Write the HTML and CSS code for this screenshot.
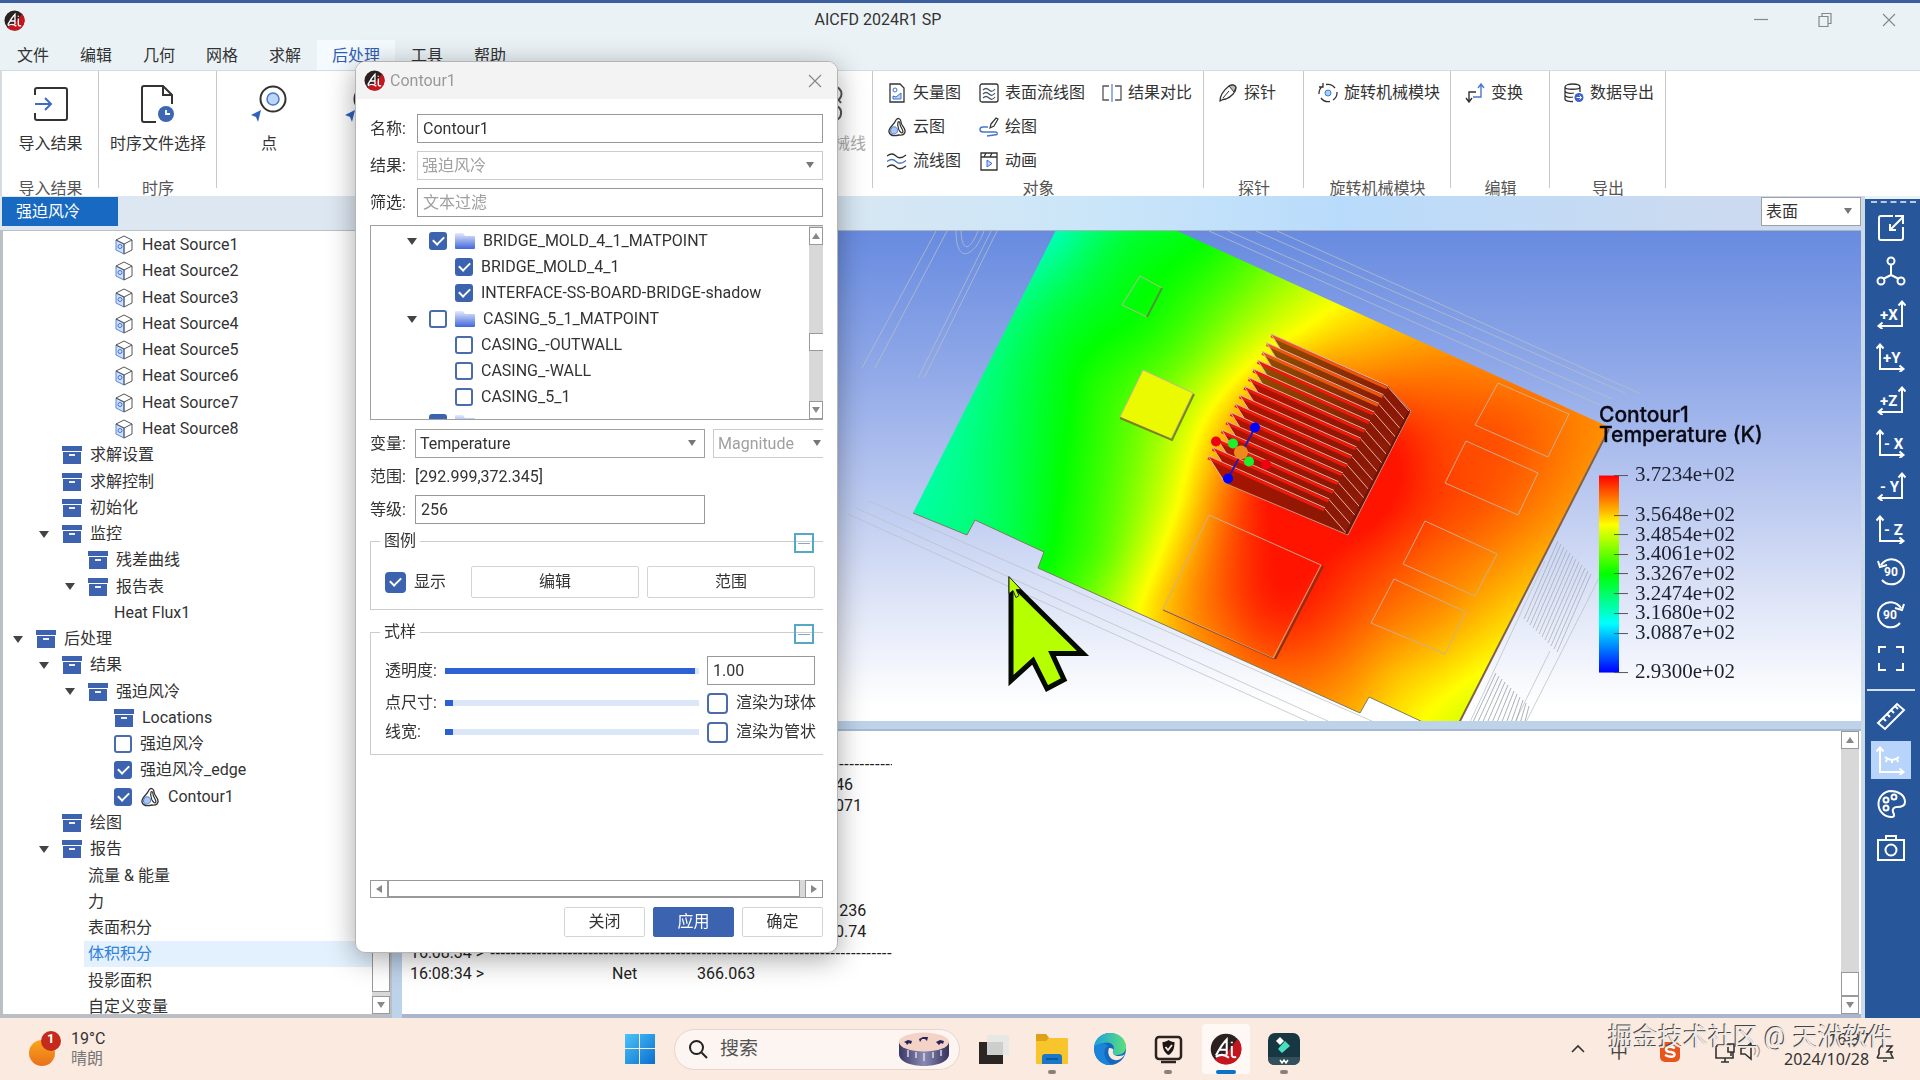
FILE: index.html
```html
<!DOCTYPE html>
<html lang="zh-CN">
<head>
<meta charset="utf-8">
<title>AICFD 2024R1 SP</title>
<link rel="stylesheet" href="styles.css">
</head>
<body>
<svg class="defs" aria-hidden="true">
  <defs>
    <linearGradient id="gFolder" x1="0" y1="0" x2="0" y2="1"><stop offset="0" stop-color="#e4e9fb"/><stop offset="1" stop-color="#3f66dc"/></linearGradient>
    <linearGradient id="gWin" x1="0" y1="0" x2="1" y2="1"><stop offset="0" stop-color="#4cc3f7"/><stop offset="1" stop-color="#0a6ed1"/></linearGradient>
    <linearGradient id="gSun" x1="0" y1="0" x2="0" y2="1"><stop offset="0" stop-color="#f9a51c"/><stop offset="1" stop-color="#e9701a"/></linearGradient>
    <linearGradient id="gEdge" x1="0" y1="0" x2="1" y2="0"><stop offset="0" stop-color="#1d9fe0"/><stop offset="1" stop-color="#5be07a"/></linearGradient>
    <linearGradient id="gCake" x1="0" y1="0" x2="1" y2="0"><stop offset="0" stop-color="#3b3763"/><stop offset=".5" stop-color="#8a8bb3"/><stop offset="1" stop-color="#35315a"/></linearGradient>
    <linearGradient id="gScale" x1="0" y1="0" x2="0" y2="1"><stop offset="0" stop-color="#f00"/><stop offset=".25" stop-color="#ff0"/><stop offset=".5" stop-color="#0f0"/><stop offset=".75" stop-color="#0ff"/><stop offset="1" stop-color="#00f"/></linearGradient>
    <symbol id="logo" viewBox="0 0 22 22"><circle cx="11" cy="11" r="10.5" fill="#2a2020"/><path d="M19 4A10.500 10.500 0 0 1 3 18L12 13Z" fill="#c4161f"/><path d="M4 15.500C6 12 8 8 11.500 4.500V15M6 11.500h5.500M15 9v6q0 2 3 1.500M15 6v1M4 16.500c3-2 6-2 9 .500" fill="none" stroke="#fff" stroke-width="1.400"/></symbol>
    <symbol id="box" viewBox="0 0 20 18"><path d="M0 0h20v5H0zM1 6h18v12H1z" fill="#3d63b0"/><path d="M7 9h6" stroke="#fff" stroke-width="1.800"/></symbol>
    <symbol id="cube" viewBox="0 0 18 20"><path d="M1 5 9 9v10L1 15z" fill="#cfe0fb" stroke="#5b86d6"/><path d="M9 1l8 4v10l-8 4M9 1 1 5l8 4 8-4M9 9v10" fill="none" stroke="#555" stroke-width="1"/><circle cx="5" cy="11.500" r="2" fill="none" stroke="#3f6fd0"/></symbol>
    <symbol id="folder" viewBox="0 0 20 16"><path d="M1 0h7l2 3h9q1 0 1 1v11q0 1-1 1H1q-1 0-1-1V1q0-1 1-1z" fill="url(#gFolder)"/></symbol>
    <symbol id="contour" viewBox="0 0 20 20"><path d="M9 3c2-3 5-1 5 2 0 4 5 6 4 10-1 4-4 3-6 3-4 1-9 1-10-3-1-4 5-7 7-12z" fill="#fff" stroke="#333" stroke-width="1.300"/><path d="M11 5c1-1 2 0 2 2 0 3 3 5 3 8-1 2-3 0-4-2-1-3-2-5-1-8z" fill="none" stroke="#333" stroke-width="1.200"/><path d="M3.500 14c0-3 3-5 5-4s3 4 1 6-6 1-6-2z" fill="#a9c6f5" stroke="#4a78c8"/></symbol>
    <symbol id="import" viewBox="0 0 36 36"><path d="M2 9V4q0-2 2-2h28q2 0 2 2v28q0 2-2 2H4q-2 0-2-2v-5" fill="none" stroke="#333" stroke-width="2"/><path d="M2 18h16M12 12l6 6-6 6" fill="none" stroke="#3d6cc0" stroke-width="2"/></symbol>
    <symbol id="timefile" viewBox="0 0 34 38"><path d="M31 19V10L22 1H3q-2 0-2 2v32q0 2 2 2h12M22 1v9h9" fill="none" stroke="#333" stroke-width="2"/><circle cx="25" cy="29" r="8" fill="#3d66b3"/><path d="M25 25v4h4" fill="none" stroke="#fff" stroke-width="1.800"/></symbol>
    <symbol id="point" viewBox="0 0 36 38"><circle cx="22" cy="14" r="12.500" fill="none" stroke="#333" stroke-width="2"/><circle cx="22" cy="14" r="6" fill="#bcd6fa" stroke="#4a78c8" stroke-width="1.500"/><path d="M10 25 0 30l5 2 2 5z" fill="#2f62bd"/></symbol>
    <symbol id="rotline" viewBox="0 0 36 38"><circle cx="26" cy="9" r="7.500" fill="none" stroke="#555" stroke-width="2"/><path d="M30 14l3 4M24 20q10 1 9 9t-11 5" fill="none" stroke="#555" stroke-width="2"/></symbol>
    <symbol id="vector" viewBox="0 0 20 20"><path d="M3 1h10l4 4v14H3z" fill="none" stroke="#333" stroke-width="1.300"/><circle cx="8" cy="7" r="2" fill="none" stroke="#3f6fd0"/><path d="M6 16v-3l3 1 5-4v6z" fill="#bcd6fa" stroke="#3f6fd0"/></symbol>
    <symbol id="surf" viewBox="0 0 20 20"><rect x="1" y="1" width="18" height="18" rx="2" fill="none" stroke="#333" stroke-width="1.300"/><path d="M4 7q3-3 6 0t6-1M4 11q3-3 6 0t6-1M4 15q3-3 6 0t6-1" fill="none" stroke="#456" stroke-width="1.200"/></symbol>
    <symbol id="compare" viewBox="0 0 20 20"><path d="M7 3H1v14h6M13 3h6v14h-6" fill="none" stroke="#555" stroke-width="1.300"/><path d="M10 1v18" stroke="#5b86d6" stroke-width="1.300"/></symbol>
    <symbol id="plot" viewBox="0 0 20 20"><path d="M12 7l5-6 2 1-4 7-4 2z" fill="none" stroke="#333" stroke-width="1.200"/><path d="M9 10H4q-3 0-3 2.500T4 15h12q3 0 2 2.500L8 19" fill="none" stroke="#4a78c8" stroke-width="1.400"/></symbol>
    <symbol id="stream" viewBox="0 0 20 20"><path d="M0 5q5-4 9 0t10-1" fill="none" stroke="#333" stroke-width="1.300"/><path d="M0 10.500q5-4 9 0t10-1" fill="none" stroke="#4a78c8" stroke-width="1.300"/><path d="M0 16q5-4 9 0t10-1" fill="none" stroke="#333" stroke-width="1.300"/></symbol>
    <symbol id="anim" viewBox="0 0 20 20"><path d="M2 2h16v17H2zM2 6h16M7 2 5 6M13 2l-2 4" fill="none" stroke="#333" stroke-width="1.300"/><path d="M8 9l5 3.500L8 16z" fill="#bcd6fa" stroke="#3f6fd0"/></symbol>
    <symbol id="probe" viewBox="0 0 20 20"><path d="M2 18c0-7 4-11 9-15 3-2 7-1 7 2 0 4-5 9-10 11l-3 .5z" fill="none" stroke="#333" stroke-width="1.300"/><path d="M11 3l5 6 2-5-3-2zM5 15l6-7" fill="#bbb" stroke="#333"/></symbol>
    <symbol id="rotmod" viewBox="0 0 20 20"><path d="M8 1.500A9 9 0 0 1 17 5M19 9a9 9 0 0 1-4 8M12 18.500A9 9 0 0 1 3 15M1 11a9 9 0 0 1 4-8M5 0v4H1" fill="none" stroke="#333" stroke-width="1.300"/><circle cx="10" cy="10" r="3" fill="#a5d3f5" stroke="#4a78c8"/></symbol>
    <symbol id="transform" viewBox="0 0 20 20"><path d="M4 19V9h7M1 15l3 4 3-4" fill="none" stroke="#333" stroke-width="1.400"/><path d="M8 14h8V2M13 5l3-4 3 4" fill="none" stroke="#4a78c8" stroke-width="1.400"/></symbol>
    <symbol id="dbout" viewBox="0 0 20 20"><path d="M1 4v12c0 2 5 3 8 2.500M1 4c0-4 15-4 15 0v5M1 4c0 3 15 3 15 0M1 8c0 2 6 3 9 2M1 12c0 2 5 3 8 2" fill="none" stroke="#333" stroke-width="1.300"/><circle cx="15" cy="14.500" r="4.500" fill="#3d63c8"/><path d="M12.500 14.500h5M15.500 12.500l2 2-2 2" fill="none" stroke="#fff"/></symbol>
    <symbol id="axR" viewBox="0 0 30 30"><path d="M26 3v24H3M22.500 6.500 26 2.500l3.500 4M6.500 23.500 2.500 27l4 3" fill="none" stroke="#fff" stroke-width="2"/></symbol>
    <symbol id="axL" viewBox="0 0 30 30"><path d="M4 3v24h23M.5 6.500 4 2.500l3.500 4M23.500 23.500l4 3.500-4 3" fill="none" stroke="#fff" stroke-width="2"/></symbol>
  </defs>
</svg>

<div class="app">
  <header class="titlebar">
    <svg class="logo"><use href="#logo"/></svg>
    <h1 class="app-title">AICFD 2024R1 SP</h1>
    <div class="win-controls">
      <button aria-label="最小化"><svg viewBox="0 0 16 16"><path d="M1 7.500h14"/></svg></button>
      <button aria-label="还原"><svg viewBox="0 0 16 16"><path d="M2 4.500h9v10H2zM5 4.500v-3h9v10h-3"/></svg></button>
      <button aria-label="关闭"><svg viewBox="0 0 16 16"><path d="M2 2l12 12M14 2 2 14"/></svg></button>
    </div>
  </header>

  <nav class="menubar">
    <button>文件</button><button>编辑</button><button>几何</button><button>网格</button><button>求解</button><button class="active">后处理</button><button>工具</button><button>帮助</button>
  </nav>

  <section class="ribbon">
    <div class="group g-import">
      <div class="big-row"><button class="big"><svg><use href="#import"/></svg>导入结果</button></div>
      <span class="group-label">导入结果</span>
    </div>
    <div class="group g-time">
      <div class="big-row"><button class="big"><svg><use href="#timefile"/></svg>时序文件选择</button></div>
      <span class="group-label">时序</span>
    </div>
    <div class="group g-loc">
      <div class="big-row">
        <button class="big"><svg><use href="#point"/></svg>点</button>
        <button class="big"><svg><use href="#point"/></svg>线</button>
        <button class="big last" disabled><svg><use href="#rotline"/></svg>旋转机械线</button>
      </div>
    </div>
    <div class="group g-obj">
      <div class="small-grid">
        <button><svg><use href="#vector"/></svg>矢量图</button>
        <button><svg><use href="#surf"/></svg>表面流线图</button>
        <button><svg><use href="#compare"/></svg>结果对比</button>
        <button><svg><use href="#contour"/></svg>云图</button>
        <button class="wide"><svg><use href="#plot"/></svg>绘图</button>
        <button><svg><use href="#stream"/></svg>流线图</button>
        <button><svg><use href="#anim"/></svg>动画</button>
      </div>
      <span class="group-label">对象</span>
    </div>
    <div class="group g-probe"><div class="small-grid one"><button><svg><use href="#probe"/></svg>探针</button></div><span class="group-label">探针</span></div>
    <div class="group g-rot"><div class="small-grid one"><button><svg><use href="#rotmod"/></svg>旋转机械模块</button></div><span class="group-label">旋转机械模块</span></div>
    <div class="group g-edit"><div class="small-grid one"><button><svg><use href="#transform"/></svg>变换</button></div><span class="group-label">编辑</span></div>
    <div class="group g-out"><div class="small-grid one"><button><svg><use href="#dbout"/></svg>数据导出</button></div><span class="group-label">导出</span></div>
  </section>

  <div class="workspace">
    <div class="main">
      <div class="tabbar">
        <button class="case-tab">强迫风冷</button>
        <span class="select repr"><select aria-label="显示方式"><option>表面</option></select></span>
      </div>
      <div class="panes">
        <aside class="tree-panel">
          <ul class="tree">
            <li class="l3"><svg class="i-cube"><use href="#cube"/></svg><span>Heat Source1</span></li>
            <li class="l3"><svg class="i-cube"><use href="#cube"/></svg><span>Heat Source2</span></li>
            <li class="l3"><svg class="i-cube"><use href="#cube"/></svg><span>Heat Source3</span></li>
            <li class="l3"><svg class="i-cube"><use href="#cube"/></svg><span>Heat Source4</span></li>
            <li class="l3"><svg class="i-cube"><use href="#cube"/></svg><span>Heat Source5</span></li>
            <li class="l3"><svg class="i-cube"><use href="#cube"/></svg><span>Heat Source6</span></li>
            <li class="l3"><svg class="i-cube"><use href="#cube"/></svg><span>Heat Source7</span></li>
            <li class="l3"><svg class="i-cube"><use href="#cube"/></svg><span>Heat Source8</span></li>
            <li class="l1"><svg class="i-box"><use href="#box"/></svg><span>求解设置</span></li>
            <li class="l1"><svg class="i-box"><use href="#box"/></svg><span>求解控制</span></li>
            <li class="l1"><svg class="i-box"><use href="#box"/></svg><span>初始化</span></li>
            <li class="l1 open"><svg class="i-box"><use href="#box"/></svg><span>监控</span></li>
            <li class="l2"><svg class="i-box"><use href="#box"/></svg><span>残差曲线</span></li>
            <li class="l2 open"><svg class="i-box"><use href="#box"/></svg><span>报告表</span></li>
            <li class="l3"><span>Heat Flux1</span></li>
            <li class="l0 open"><svg class="i-box"><use href="#box"/></svg><span>后处理</span></li>
            <li class="l1 open"><svg class="i-box"><use href="#box"/></svg><span>结果</span></li>
            <li class="l2 open"><svg class="i-box"><use href="#box"/></svg><span>强迫风冷</span></li>
            <li class="l3"><svg class="i-box"><use href="#box"/></svg><span>Locations</span></li>
            <li class="l3"><label><input type="checkbox">强迫风冷</label></li>
            <li class="l3"><label><input type="checkbox" checked>强迫风冷_edge</label></li>
            <li class="l3"><label><input type="checkbox" checked><svg class="i-cont"><use href="#contour"/></svg>Contour1</label></li>
            <li class="l1"><svg class="i-box"><use href="#box"/></svg><span>绘图</span></li>
            <li class="l1 open"><svg class="i-box"><use href="#box"/></svg><span>报告</span></li>
            <li class="l2"><span>流量 &amp; 能量</span></li>
            <li class="l2"><span>力</span></li>
            <li class="l2"><span>表面积分</span></li>
            <li class="l2"><span class="selected">体积积分</span></li>
            <li class="l2"><span>投影面积</span></li>
            <li class="l2"><span>自定义变量</span></li>
          </ul>
          <div class="vscroll"><i class="thumb"></i><i class="sbtn down"></i></div>
        </aside>

        <div class="right">
          <div class="viewport">
            <canvas id="scene" width="1459" height="491"></canvas>
            <svg viewBox="402 230 1459 491" preserveAspectRatio="xMidYMid slice">
              <g stroke-width="2">
                <path d="M1255 427 1228 478" stroke="#2a18b0"/>
                <circle cx="1255" cy="427" r="5" fill="#00f"/><circle cx="1228" cy="478" r="5" fill="#00f"/>
                <circle cx="1216" cy="441" r="5" fill="#f00010"/><circle cx="1266" cy="464" r="5" fill="#f00010"/>
                <circle cx="1241" cy="452" r="7" fill="#ee8a1c"/><circle cx="1233" cy="443" r="5" fill="#1cf02c"/><circle cx="1249" cy="461" r="5" fill="#1cf02c"/>
              </g>
              <rect x="1599" y="475" width="20" height="197" fill="url(#gScale)"/>
              <path d="M1614 475h14M1614 515h14M1614 534h14M1614 554h14M1614 573h14M1614 593h14M1614 613h14M1614 633h14M1614 672h14" stroke="#555" stroke-width="1"/>
              <g class="legend-title"><text x="1599" y="421">Contour1</text><text x="1599" y="441">Temperature (K)</text></g>
              <g class="legend-num">
                <text x="1635" y="480">3.7234e+02</text><text x="1635" y="520">3.5648e+02</text><text x="1635" y="540">3.4854e+02</text><text x="1635" y="559">3.4061e+02</text><text x="1635" y="579">3.3267e+02</text><text x="1635" y="599">3.2474e+02</text><text x="1635" y="618">3.1680e+02</text><text x="1635" y="638">3.0887e+02</text><text x="1635" y="677">2.9300e+02</text>
              </g>
              <path d="M1011 582V680L1033 660 1047 688 1064 679 1052 653H1083Z" fill="#b6ff00" stroke="#050a00" stroke-width="5"/>
              <path d="M1009 576v17l4-3 3 7 3-2-3-6h5z" fill="#b6ff00" stroke="#222" stroke-width="1"/>
            </svg>
          </div>
          <div class="console">
            <div class="log">
              <p><span></span><span class="dash">-------------------------------------------------------------</span></p>
              <p><span></span><span></span><span></span><span>146</span></p>
              <p><span></span><span></span><span></span><span>0071</span></p>
              <p></p><p></p><p></p><p></p>
              <p><span></span><span></span><span></span><span>0.236</span></p>
              <p><span></span><span></span><span></span><span>00.74</span></p>
              <p><span>16:08:34 &gt;</span><span class="dash long">-------------------------------------------------------------------------------------</span></p>
              <p><span>16:08:34 &gt;</span><span>Net</span><span>366.063</span></p>
            </div>
            <div class="vscroll"><i class="sbtn up"></i><i class="track"></i><i class="thumb"></i><i class="sbtn down"></i></div>
          </div>
        </div>
      </div>
    </div>

    <nav class="toolbar">
      <button aria-label="导出视图"><svg viewBox="0 0 30 30"><path d="M17 3H5q-2 0-2 2v20q0 2 2 2h20q2 0 2-2V14M15 16 27 4M19 3h8v8M14 11v6h6"/></svg></button>
      <button aria-label="等轴测"><svg viewBox="0 0 30 30"><path d="M15 8v11M15 19l-8 4M15 19l8 4"/><circle cx="15" cy="5" r="3.500"/><circle cx="5" cy="25" r="3.500"/><circle cx="25" cy="25" r="3.500"/></svg></button>
      <button><svg viewBox="0 0 30 30"><use href="#axR"/><text x="4" y="21">+X</text></svg></button>
      <button><svg viewBox="0 0 30 30"><use href="#axL"/><text x="7" y="21">+Y</text></svg></button>
      <button><svg viewBox="0 0 30 30"><use href="#axR"/><text x="4" y="21">+Z</text></svg></button>
      <button><svg viewBox="0 0 30 30"><use href="#axL"/><text x="8" y="21">- X</text></svg></button>
      <button><svg viewBox="0 0 30 30"><use href="#axR"/><text x="4" y="21">- Y</text></svg></button>
      <button><svg viewBox="0 0 30 30"><use href="#axL"/><text x="8" y="21">- Z</text></svg></button>
      <button><svg viewBox="0 0 30 30"><path d="M5 8A12.500 12.500 0 1 1 6 23M2 4l2 6 7-2"/><text class="deg" x="8" y="19">90</text></svg></button>
      <button><svg viewBox="0 0 30 30"><path d="M25 8A12.500 12.500 0 1 0 24 23M28 4l-2 6-7-2"/><text class="deg" x="7" y="19">90</text></svg></button>
      <button aria-label="适应窗口"><svg viewBox="0 0 30 30"><path d="M3 10V4h7M20 4h7v6M27 20v7h-7M10 27H3v-7"/></svg></button>
      <hr>
      <button class="lower" aria-label="标尺"><svg viewBox="0 0 30 30"><path d="M2 22 21 3l7 6L9 28zM7 17l3 3M11 13l3 3M15 9l3 3M19 5l3 3"/></svg></button>
      <button class="lower on" aria-label="坐标轴"><svg viewBox="0 0 30 30"><use href="#axL"/><path d="M9 12q7 6 14 0M11 14l-1 3M16 15v3M21 14l1 3"/></svg></button>
      <button class="lower" aria-label="配色"><svg viewBox="0 0 30 30"><path d="M15 2a13 13 0 1 0 1 26c3 0 2-3 1-5-1-3 1-5 4-5 5 0 8-1 8-5C29 6 22 2 15 2z"/><circle cx="10" cy="11" r="2.500"/><circle cx="18" cy="8" r="2.500"/><circle cx="10" cy="19" r="2.500"/></svg></button>
      <button class="lower" aria-label="截图"><svg viewBox="0 0 30 30"><path d="M2 7h26v20H2zM10 7V3h10v4"/><circle cx="15" cy="17" r="5.500"/></svg></button>
    </nav>
  </div>

  <footer class="taskbar">
    <div class="weather">
      <svg viewBox="0 0 36 36"><circle cx="14" cy="22" r="13" fill="url(#gSun)"/><circle cx="23" cy="10" r="10" fill="#c42b1c"/></svg>
      <b class="badge">1</b>
      <div><span>19°C</span><span class="dim">晴朗</span></div>
    </div>
    <div class="dock">
      <button aria-label="开始"><svg viewBox="0 0 32 32"><path d="M1 1h14v14H1zM16 1h15v14H16zM1 16h14v15H1zM16 16h15v15H16z" fill="url(#gWin)"/></svg></button>
      <label class="search"><svg viewBox="0 0 20 20"><circle cx="8.500" cy="8.500" r="6.500" fill="none" stroke="#222" stroke-width="2"/><path d="M13.500 13.500 19 19" stroke="#222" stroke-width="2"/></svg><input type="text" placeholder="搜索" aria-label="搜索">
        <svg class="cake" viewBox="0 0 50 34"><path d="M0 10v12c0 16 50 16 50 0V10z" fill="url(#gCake)"/><ellipse cx="25" cy="10" rx="25" ry="9.500" fill="#f4d3c6"/><path d="M5 10l4-2 4 1-1 3-2-1-2 2-1-2zM20 7l4-2 5 0-1 4-2-2-3 0-2 3zM37 10l4-2 4 1-1 3-2-1-2 2z" fill="#26225c"/><path d="M9 18v7M17 20v6M25 21v8M34 20v6M42 18v6" stroke="#d7d7ea" stroke-width="1.500"/></svg></label>
      <button aria-label="任务视图"><svg viewBox="0 0 32 32"><path d="M1 9h24v22H1z" fill="#2b2624"/><path d="M9 2h22v20H9z" fill="#e4e6e6" fill-opacity=".88"/></svg></button>
      <button class="run" aria-label="文件资源管理器"><svg viewBox="0 0 32 32"><path d="M0 2q0-1 1-1h9l3 4h18q1 0 1 1v24q0 1-1 1H1q-1 0-1-1z" fill="#f9c52c"/><path d="M0 2q0-1 1-1h9l3 4-3 3H0z" fill="#dda016"/><path d="M6 31v-7q0-3 3-3h14q3 0 3 3v7z" fill="#1b78c9"/><path d="M10 26h12" stroke="#0e4d93" stroke-width="1.500"/></svg></button>
      <button aria-label="浏览器"><svg viewBox="0 0 32 32"><circle cx="16" cy="16" r="16" fill="#1268bd"/><path d="M0 14C1 5 8 0 16 0c9 0 16 6 16 14 0 5-4 8-9 8-4 0-5-2-4-4 3-6-3-10-9-8-5 1-8 4-10 4z" fill="url(#gEdge)"/><path d="M19 18c-1 3 2 5 6 5 3 0 5-1 6-2-2 4-7 7-10 6-6-1-8-7-6-12 3 0 5 1 4 3z" fill="#fbeae0"/><path d="M0 14c3-4 10-5 14-1-5 2-6 13 4 19C8 33 0 26 0 14z" fill="#1b84d8"/></svg></button>
      <button class="run" aria-label="安全中心"><svg viewBox="0 0 32 32"><rect x="4" y="4" width="25" height="22" rx="3" fill="none" stroke="#2c2320" stroke-width="2.500"/><path d="M16.500 7c2 1.500 4 2 6 2 0 7-2 11-6 13-4-2-6-6-6-13 2 0 4-.500 6-2z" fill="#1d1614"/><path d="M13.500 14l2.500 3 4-5" fill="none" stroke="#fbeae0" stroke-width="1.800"/><path d="M9 29h15" stroke="#2c2320" stroke-width="2.500"/></svg></button>
      <button class="run current" aria-label="AICFD"><svg><use href="#logo"/></svg></button>
      <button class="run" aria-label="Filmora"><svg viewBox="0 0 32 32"><rect width="32" height="32" rx="7" fill="#173843"/><path d="M0 24h32v1q0 7-7 7H7q-7 0-7-7z" fill="#31505c"/><path d="M12 4l4 4-4 4-4-4z" fill="#fff"/><path d="M17 8l5 5-8 7-4-4z" fill="#48e0c0"/><path d="M12 27l2 3 2-3 2 3 2-3" fill="none" stroke="#fff" stroke-width="1.500"/></svg></button>
    </div>
    <div class="tray">
      <svg class="t-chev" viewBox="0 0 16 16"><path d="M2 11l6-6 6 6"/></svg>
      <span class="ime">中</span>
      <svg class="sogou" viewBox="0 0 20 20"><rect width="20" height="20" rx="5" fill="#e8541c"/><path d="M15 6q-8-3-9 1 0 3 5 3 5 1 3 4-3 2-9-1" fill="none" stroke="#fff" stroke-width="2.500"/></svg>
      <svg class="t-net" viewBox="0 0 22 20"><path d="M2 3h11M2 3v12h17V9M7 19h8M11 15v4M14 1h6v8h-6zM17 9v4"/></svg>
      <svg class="t-vol" viewBox="0 0 22 20"><path d="M1 7h4l6-5v16l-6-5H1z"/><path d="M14 6q3 4 0 8M17 4q5 6 0 12" stroke="#b9aca5"/></svg>
      <time><span>16:37</span><span>2024/10/28</span></time>
      <svg class="t-bell" viewBox="0 0 18 20"><path d="M1 15h16l-2-4V8M1 15l2-4V7q1-5 6-5M7 18h4M10 3h6l-5 6h6"/></svg>
      <span class="watermark">掘金技术社区 @ 天洑软件</span>
    </div>
  </footer>
</div>

<section class="dialog" role="dialog" aria-label="Contour1">
  <header class="dlg-head"><svg class="logo"><use href="#logo"/></svg><h2>Contour1</h2><button aria-label="关闭"><svg viewBox="0 0 16 16"><path d="M2 2l12 12M14 2 2 14"/></svg></button></header>
  <form class="dlg-body">
    <div class="field"><label for="f-name">名称:</label><input id="f-name" type="text" value="Contour1"></div>
    <div class="field"><label for="f-res">结果:</label><span class="select off"><select id="f-res" disabled><option>强迫风冷</option></select></span></div>
    <div class="field"><label for="f-flt">筛选:</label><input id="f-flt" type="text" placeholder="文本过滤"></div>
    <div class="picker">
      <ul>
        <li class="parent"><label><input type="checkbox" checked><svg class="i-fold"><use href="#folder"/></svg>BRIDGE_MOLD_4_1_MATPOINT</label></li>
        <li><label><input type="checkbox" checked>BRIDGE_MOLD_4_1</label></li>
        <li><label><input type="checkbox" checked>INTERFACE-SS-BOARD-BRIDGE-shadow</label></li>
        <li class="parent"><label><input type="checkbox"><svg class="i-fold"><use href="#folder"/></svg>CASING_5_1_MATPOINT</label></li>
        <li><label><input type="checkbox">CASING_-OUTWALL</label></li>
        <li><label><input type="checkbox">CASING_-WALL</label></li>
        <li><label><input type="checkbox">CASING_5_1</label></li>
        <li class="parent closed"><label><input type="checkbox" checked><svg class="i-fold"><use href="#folder"/></svg></label></li>
      </ul>
      <div class="vscroll"><i class="sbtn up"></i><i class="track a"></i><i class="thumb"></i><i class="track b"></i><i class="sbtn down"></i></div>
    </div>
    <div class="field2 first"><label for="f-var">变量:</label><span class="select"><select id="f-var"><option>Temperature</option></select></span><span class="select off mag"><select aria-label="分量" disabled><option>Magnitude</option></select></span></div>
    <div class="field2 plain"><span>范围:</span><output>[292.999,372.345]</output></div>
    <div class="field2"><label for="f-lvl">等级:</label><input id="f-lvl" type="text" value="256"></div>

    <fieldset class="box-legend">
      <legend>图例</legend><button type="button" class="fold" aria-label="折叠图例"></button>
      <div class="legend-row"><label><input type="checkbox" class="lg" checked>显示</label><button type="button">编辑</button><button type="button">范围</button></div>
    </fieldset>
    <fieldset class="box-style">
      <legend>式样</legend><button type="button" class="fold" aria-label="折叠式样"></button>
      <div class="style-grid">
        <label for="s-op">透明度:</label><input id="s-op" type="range" class="full" value="100"><input type="text" aria-label="透明度数值" value="1.00">
        <label for="s-pt">点尺寸:</label><input id="s-pt" type="range" value="0"><label><input type="checkbox" class="lg">渲染为球体</label>
        <label for="s-ln">线宽:</label><input id="s-ln" type="range" value="0"><label><input type="checkbox" class="lg">渲染为管状</label>
      </div>
    </fieldset>
    <div class="hscroll"><i class="sbtn left"></i><i class="thumb"></i><i class="sbtn rightb"></i></div>
    <div class="actions"><button type="button">关闭</button><button type="button" class="primary">应用</button><button type="button">确定</button></div>
  </form>
</section>
<script src="scene.js"></script>
</body>
</html>
```
FILE: styles.css
```css
* { box-sizing: border-box; }
html, body { height: 100%; margin: 0; }
body { font: 16px/20px Roboto, "Noto Sans CJK SC", sans-serif; color: #333; background: #fff; overflow: hidden; }
button, input, select { font: inherit; color: inherit; margin: 0; }
button { background: none; border: 0; padding: 0; }
ul { list-style: none; margin: 0; padding: 0; }
h1, h2, p { margin: 0; font-weight: 400; font-size: 16px; }
svg { display: block; flex: none; }
.defs { position: absolute; width: 0; height: 0; }
.app { height: 100vh; display: flex; flex-direction: column; border-top: 3px solid #3b5f9e; background: #eaf2f6; }

/* title and menu */
.titlebar { height: 37px; flex: none; display: grid; grid-template-columns: 200px 1fr 200px; align-items: center; padding: 0 0 3px 4px; }
.logo { width: 21px; height: 21px; }
.app-title { justify-self: center; padding-right: 168px; }
.win-controls { display: flex; justify-content: flex-end; gap: 48px; padding-right: 23px; }
.win-controls svg, .dlg-head button svg { width: 16px; height: 16px; fill: none; stroke: #888; stroke-width: 1.2; }
.menubar { height: 30px; flex: none; display: flex; gap: 1px; padding-left: 2px; }
.menubar button { padding: 2px 15px 0; }
.menubar .active { background: #f4fafd; color: #2f5fb5; }

/* ribbon */
.ribbon { height: 126px; flex: none; display: flex; background: #fff; border-top: 1px solid #d5dbe0; border-left: 2px solid #d5dbe0; }
.group { position: relative; display: flex; flex-direction: column; justify-content: space-between; padding-top: 5px; }
.group::after { content: ""; position: absolute; right: 0; top: 0; bottom: 8px; width: 1px; background: #c9c9c9; }
.g-import { width: 97px; } .g-time { width: 118px; } .g-loc { width: 656px; } .g-obj { width: 331px; }
.g-probe { width: 100px; } .g-rot { width: 147px; } .g-edit { width: 99px; } .g-out { width: 116px; }
.group-label { align-self: center; color: #555; height: 17px; line-height: 20px; }
.big-row { display: flex; justify-content: center; }
.g-loc .big-row { justify-content: flex-start; padding-left: 5px; }
.big { width: 94px; display: flex; flex-direction: column; align-items: center; gap: 11px; padding-top: 9px; white-space: nowrap; }
.g-time .big { width: 112px; }
.big svg { width: 36px; height: 38px; }
.big.last { margin-left: auto; color: #aaa; }
.small-grid { display: grid; grid-template-columns: 92px 123px auto; padding-left: 14px; }
.small-grid.one { grid-template-columns: auto; }
.small-grid button { height: 34px; display: flex; align-items: center; gap: 6px; white-space: nowrap; }
.small-grid .wide { grid-column: 2 / 4; }
.small-grid svg { width: 20px; height: 20px; }

/* workspace */
.workspace { flex: 1; min-height: 0; display: flex; }
.main { flex: 1; min-width: 0; display: flex; flex-direction: column; border-right: 4px solid #ccd9e6; }
.tabbar { height: 34px; flex: none; display: flex; justify-content: space-between; align-items: flex-start; padding: 1px 0 0 2px; background: linear-gradient(90deg, #dde7f1 40%, #cbe6f8 58%, #b9dbfb 72%, #cbdaf0 92%); }
.case-tab { width: 116px; height: 29px; background: #1769c2; color: #fff; text-align: left; padding-left: 14px; }
.select { position: relative; display: block; border: 1px solid #a0a0a0; background: #fff; height: 29px; }
.select select { appearance: none; border: 0; background: none; width: 100%; height: 100%; padding: 0 4px; display: block; opacity: 1; }
.select::after { content: ""; position: absolute; right: 8px; top: 10px; border: 4px solid transparent; border-top: 6px solid #777; border-bottom: 0; pointer-events: none; }
.select.off { border-color: #ccc; color: #a0a0a0; }
.repr { width: 100px; }
.panes { flex: 1; min-height: 0; display: flex; }
.tree-panel { width: 392px; flex: none; display: flex; background: #fff; border: solid #b9bfc4; border-width: 1px 2px 4px 3px; overflow: hidden; }
.tree { flex: 1; height: calc(100% + 6px); padding-top: 1px; display: grid; grid-auto-rows: 1fr; }
.tree li { display: flex; align-items: center; gap: 8px; min-height: 0; }
.tree li::before { content: ""; width: 0; flex: none; margin: 0 5px 0 3px; border: 5px solid transparent; border-bottom: 0; }
.tree li.open::before { border-top: 7px solid #444; }
.l0 { padding-left: 7px; } .l1 { padding-left: 33px; } .l2 { padding-left: 59px; } .l3 { padding-left: 85px; }
.tree label, .picker label { display: flex; align-items: center; gap: 8px; }
.tree span { flex: 1; align-self: stretch; display: flex; align-items: center; margin-left: -4px; padding-left: 4px; }
.tree .selected { background: #e2f1fd; color: #2f80e0; }
.i-box { width: 20px; height: 18px; } .i-cube { width: 20px; height: 20px; } .i-cont { width: 20px; height: 20px; } .i-fold { width: 20px; height: 16px; }

input[type=checkbox] { appearance: none; width: 18px; height: 18px; flex: none; border: 2px solid #4a6cab; border-radius: 3px; background: #fff; display: grid; place-items: center; }
input[type=checkbox]:checked { background: #3c63b0; border-color: #3c63b0; }
input[type=checkbox]:checked::after { content: ""; width: 9px; height: 5px; border: solid #fff; border-width: 0 0 2px 2px; transform: rotate(-45deg); margin-bottom: 3px; }
input.lg[type=checkbox] { width: 21px; height: 21px; border-radius: 4px; }

/* scroll bars */
.vscroll { width: 18px; flex: none; display: flex; flex-direction: column; background: #d8d8d8; }
.vscroll .thumb { background: #fff; border: 1px solid #999; }
.sbtn { flex: none; width: 100%; height: 18px; background: #fff; border: 1px solid #999; display: grid; place-items: center; }
.sbtn::before { content: ""; border: 4px solid transparent; }
.sbtn.up::before { border-bottom: 6px solid #888; border-top: 0; }
.sbtn.down::before { border-top: 6px solid #888; border-bottom: 0; }
.sbtn.left::before { border-right: 6px solid #888; border-left: 0; }
.sbtn.rightb::before { border-left: 6px solid #888; border-right: 0; }
.tree-panel .thumb { flex: 1; margin-bottom: 4px; }

/* viewport and console */
.right { flex: 1; min-width: 0; display: flex; flex-direction: column; padding-left: 10px; background: #bdd3ea; }
.viewport { flex: 492 1 0; min-height: 0; position: relative; overflow: hidden; border-top: 1px solid #aab4c0; background: linear-gradient(#688be0 0%, #8fa8e8 28%, #bccaf0 55%, #e1e7f8 77%, #fff 97%); }
.viewport canvas, .viewport svg { position: absolute; inset: 0; width: 100%; height: 100%; object-fit: cover; }
.legend-title { font: 500 21px Inter, sans-serif; fill: #0a0a14; stroke: #0a0a14; stroke-width: .3; }
.legend-num { font: 21px "Liberation Serif", serif; fill: #1c2030; }
.console { flex: 284 1 0; min-height: 0; margin-top: 8px; padding-right: 2px; display: flex; background: #fff; border-top: 2px solid #a9b9d0; border-bottom: 4px solid #aab4cc; }
.log { flex: 1; min-width: 0; overflow: hidden; padding: 22px 0 0 8px; color: #222; }
.log p { height: 21px; display: grid; grid-template-columns: 202px 85px 129px auto; line-height: 21px; white-space: nowrap; }
.log .dash { grid-column: 2 / 5; width: 280px; overflow: hidden; font-family: "Noto Sans", sans-serif; }
.log .long { margin-left: -122px; width: 402px; }
.console .vscroll .track { flex: 1; }
.console .vscroll .thumb { height: 24px; }

/* view toolbar */
.toolbar { width: 55px; flex: none; background: #28569a; display: flex; flex-direction: column; align-items: center; padding: 7px 3px 0 0; margin-top: 3px; position: relative; }
.toolbar::before { content: ""; position: absolute; top: 2px; left: 6px; right: 4px; border-top: 2px dashed #b9cbe6; }
.toolbar button { height: 43px; width: 40px; display: grid; place-items: center; flex: none; }
.toolbar svg { width: 30px; height: 30px; fill: none; stroke: #fff; stroke-width: 2; overflow: visible; }
.toolbar text { font: 700 15px Roboto, sans-serif; fill: #fff; stroke: none; }
.toolbar .deg { font-size: 12px; }
.toolbar hr { width: 48px; border: 0; border-top: 2px solid #d5e0f0; margin: 10px 0 6px; }
.toolbar .lower { height: 38px; margin-bottom: 6px; }
.toolbar .on { background: #b9d4fb; }

/* taskbar */
.taskbar { height: 62px; flex: none; display: grid; grid-template-columns: 1fr auto 1fr; align-items: center; background: #fbeae0; }
.weather { position: relative; display: flex; gap: 7px; padding-left: 28px; line-height: 20px; }
.weather svg { width: 36px; height: 36px; align-self: center; }
.weather div { display: grid; }
.badge { position: absolute; left: 47px; top: 0; color: #fff; font-size: 13px; line-height: 20px; }
.dim { color: #777; }
.dock { display: flex; align-items: center; gap: 10px; padding-left: 4px; }
.dock button { position: relative; width: 48px; height: 50px; display: grid; place-items: center; border-radius: 4px; }
.dock button svg { width: 32px; height: 32px; }
.dock .current { background: #fff8f4; }
.run::after { content: ""; position: absolute; bottom: 0; left: 20px; width: 8px; height: 4px; border-radius: 2px; background: #8b817c; }
.dock .current::after { left: 14px; width: 20px; background: #0a74cc; }
.search { width: 286px; height: 41px; border-radius: 21px; background: #fdf5f1; border: 1px solid #e7d5cb; display: flex; align-items: center; gap: 12px; padding: 0 10px 0 13px; }
.search > svg { width: 20px; height: 20px; }
.search input { flex: 1; min-width: 0; border: 0; background: none; outline: 0; font-size: 19px; padding: 0; }
.search input::placeholder { color: #555; }
.search .cake { width: 50px; height: 34px; }
.tray { position: relative; display: flex; align-items: center; justify-content: flex-end; padding: 0 26px 0 0; }
.tray svg { width: 22px; height: 20px; fill: none; stroke: #333; stroke-width: 1.6; }
.tray .t-chev { width: 16px; margin-right: 24px; }
.ime { font-size: 18px; margin: 6px 32px 0 0; color: #444; }
.tray .sogou { width: 20px; margin-right: 34px; margin-top: 6px; stroke: none; }
.t-net { margin-right: 4px; margin-top: 8px; }
.t-vol { margin-right: 22px; margin-top: 4px; }
.tray time { display: grid; justify-items: end; width: 82px; font: 16px/20px "Noto Sans", sans-serif; margin-right: 10px; }
.tray .t-bell { width: 18px; margin-top: 8px; }
.watermark { position: absolute; right: 27px; top: -9px; font-size: 25px; line-height: 36px; color: #eee8e4; white-space: nowrap; text-shadow: -1px -1px 0 #444; }

/* dialog */
.dialog { position: absolute; left: 355px; top: 61px; width: 483px; background: #fff; border: 1px solid #b4b4b4; border-radius: 10px; box-shadow: 0 6px 28px rgba(0, 0, 0, .35); overflow: hidden; }
.dlg-head { height: 37px; background: #f3f3f3; display: flex; align-items: center; gap: 5px; padding: 0 14px 0 8px; }
.dlg-head h2 { flex: 1; color: #999; }
.dlg-body { padding: 15px 14px 15px; }
.field { display: grid; grid-template-columns: 47px 1fr; align-items: center; height: 29px; margin-bottom: 8px; }
.dialog input[type=text] { width: 100%; height: 29px; border: 1px solid #999; outline: 0; padding: 0 5px; background: #fff; min-width: 0; }
.dialog input::placeholder { color: #a0a0a0; }
.picker { height: 195px; border: 1px solid #a0a0a0; border-right: 0; display: flex; overflow: hidden; }
.picker ul { flex: 1; padding-top: 2px; }
.picker li { height: 26px; display: flex; align-items: center; padding-left: 84px; }
.picker li.parent { padding-left: 36px; }
.picker li.parent::before { content: ""; margin-right: 12px; border: 5px solid transparent; border-top: 7px solid #444; border-bottom: 0; }
.picker li.closed::before { border-color: transparent; }
.picker .vscroll { width: 14px; padding-top: 1px; }
.picker .track.a { flex: 88; } .picker .track.b { flex: 50; } .picker .thumb { height: 18px; border-right: 0; }
.field2 { display: grid; grid-template-columns: 45px 290px 110px; align-items: center; height: 29px; margin-bottom: 4px; }
.field2.first { margin-top: 9px; }
.field2 .mag { margin-left: 8px; margin-right: -8px; border-right: 0; }
.mag::after { right: 2px; }
fieldset { position: relative; margin: 0; min-width: 0; border: 1px solid #ccc; border-right: 0; padding: 0 8px 0 14px; }
legend { padding: 0 4px; margin-left: -5px; line-height: 20px; }
.box-legend { margin-top: 7px; height: 79px; }
.box-style { margin-top: 12px; height: 133px; }
.fold { position: absolute; right: 9px; top: -18px; width: 20px; height: 20px; border: 2px solid #56a9c6; background: linear-gradient(#8ab, #8ab) center / 12px 1px no-repeat; }
.legend-row { display: grid; grid-template-columns: 78px 1fr 1fr; gap: 8px; padding-top: 15px; }
fieldset label { display: flex; align-items: center; gap: 8px; white-space: nowrap; }
.legend-row button, .actions button { height: 32px; border: 1px solid #d4d4d4; border-radius: 2px; background: #fff; }
.style-grid { display: grid; grid-template-columns: 60px 254px 1fr; grid-template-rows: 29px 36px 22px; column-gap: 0; align-items: center; padding-top: 14px; }
.style-grid > input[type=text] { width: 108px; }
.style-grid > :nth-child(3n) { margin-left: 8px; }
input[type=range] { appearance: none; width: 254px; height: 6px; margin: 0; background: #dbe6f6; }
input[type=range].full { background: #2f61d6; border-right: 4px solid #dbe6f6; }
input[type=range]::-webkit-slider-thumb { appearance: none; width: 8px; height: 6px; background: #2b5fd4; }
.hscroll { display: flex; height: 18px; margin-top: 125px; background: #d8d8d8; border-bottom: 1px solid #999; }
.hscroll .sbtn { width: 18px; }
.hscroll .thumb { flex: 1; background: #fff; border: 1px solid #999; margin-right: 5px; }
.actions { display: flex; justify-content: flex-end; gap: 8px; margin-top: 9px; }
.actions button { width: 81px; height: 30px; }
.actions .primary { background: #3c63b0; border-color: #3c63b0; color: #fff; }
```
FILE: scene.js
```js
// Draws the temperature field on the board, the heat sink and the outlines.
(function () {
  const canvas = document.getElementById('scene');
  const ctx = canvas.getContext('2d');
  const X0 = 402, Y0 = 230, W = canvas.width, H = canvas.height;

  // x, y, normalised temperature
  const samples = [
    [1058,235,.33],[1095,250,.42],[1130,245,.46],[1024,320,.40],[983,407,.38],[942,470,.35],[913,512,.34],[970,530,.38],[1015,503,.43],[1032,545,.46],
    [1060,320,.45],[1203,240,.5],[1130,320,.5],[1072,400,.5],[1063,470,.5],[1055,520,.5],[1045,565,.5],
    [1228,270,.56],[1268,287,.64],[1187,353,.6],[1093,387,.53],[1117,453,.58],[1105,553,.59],[1085,580,.58],[1199,407,.72],
    [1332,307,.75],[1300,330,.75],[1250,355,.73],[1210,410,.75],[1192,450,.75],[1180,500,.75],[1166,537,.75],[1140,605,.75],
    [1399,353,.85],[1444,353,.86],[1500,380,.88],[1560,405,.88],[1605,425,.86],[1590,460,.86],[1540,560,.83],[1510,620,.79],
    [1480,680,.74],[1460,715,.72],[1430,700,.76],[1440,660,.8],[1391,680,.81],[1360,703,.83],[1289,670,.9],[1228,640,.89],
    [1187,620,.85],[1166,587,.8],[1207,503,.84],[1370,500,1],[1400,440,.97],[1300,540,.99],[1280,590,.98],[1260,630,.94],[1240,575,.94],[1350,560,.96],
    [1450,460,.93],[1480,500,.92],[1500,430,.92],[1390,610,.89],[1250,500,.95],[1300,430,.99],[1430,560,.9],[1440,610,.86],
    [1420,390,.9],[1360,375,.87]
  ];

  // Thin-plate spline through the samples
  const n = samples.length, m = n + 3;
  const phi = (dx, dy) => { const r = dx * dx + dy * dy; return r ? r * Math.log(r) : 0; };
  const pts = samples.map(s => [(s[0] - 1250) / 300, (s[1] - 475) / 300, s[2]]);
  const A = [];
  for (let i = 0; i < m; i++) A.push(new Array(m + 1).fill(0));
  for (let i = 0; i < n; i++) {
    for (let j = 0; j < n; j++) A[i][j] = phi(pts[i][0] - pts[j][0], pts[i][1] - pts[j][1]) + (i === j ? .01 : 0);
    [1, pts[i][0], pts[i][1]].forEach((v, k) => { A[i][n + k] = v; A[n + k][i] = v; });
    A[i][m] = pts[i][2];
  }
  for (let c = 0; c < m; c++) {
    let p = c;
    for (let r = c + 1; r < m; r++) if (Math.abs(A[r][c]) > Math.abs(A[p][c])) p = r;
    [A[c], A[p]] = [A[p], A[c]];
    for (let r = 0; r < m; r++) {
      if (r === c) continue;
      const f = A[r][c] / A[c][c];
      for (let k = c; k <= m; k++) A[r][k] -= f * A[c][k];
    }
  }
  const w = A.map((row, i) => row[m] / row[i]);
  const field = (x, y) => {
    const u = (x - 1250) / 300, v = (y - 475) / 300;
    let t = w[n] + w[n + 1] * u + w[n + 2] * v;
    for (let i = 0; i < n; i++) t += w[i] * phi(u - pts[i][0], v - pts[i][1]);
    return Math.min(.98, Math.max(.3, t));
  };
  const color = t => t > .75 ? [255, 255 * (1 - t) * 4, 0]
    : t > .5 ? [255 * (t - .5) * 4, 255, 0] : [0, 255, 255 * (.5 - t) * 4];

  const S = 4, lw = Math.ceil(W / S), lh = Math.ceil(H / S);
  const low = document.createElement('canvas');
  low.width = lw; low.height = lh;
  const img = new ImageData(lw, lh);
  for (let y = 0; y < lh; y++) for (let x = 0; x < lw; x++) {
    const c = color(field(X0 + x * S + 2, Y0 + y * S + 2)), o = (y * lw + x) * 4;
    img.data[o] = c[0]; img.data[o + 1] = c[1]; img.data[o + 2] = c[2]; img.data[o + 3] = 255;
  }
  low.getContext('2d').putImageData(img, 0, 0);

  ctx.translate(-X0, -Y0);
  const path = (p, close) => {
    ctx.beginPath();
    p.forEach((q, i) => i ? ctx.lineTo(q[0], q[1]) : ctx.moveTo(q[0], q[1]));
    if (close) ctx.closePath();
  };
  const line = (p, style, width, close) => { path(p, close); ctx.strokeStyle = style; ctx.lineWidth = width; ctx.stroke(); };

  // Casing wireframe
  const wire = 'rgba(185,192,198,.75)';
  [[936,230,862,367],[947,230,875,367],[991,230,918,377],[997,230,924,377],
   [1209,230,1600,404],[1228,230,1612,398],[1256,230,1625,392],[1277,230,1641,393],
   [869,500,1374,721],[856,507,1330,721],[848,513,1309,721],
   [1600,575,1526,721],[1545,560,1470,721],[1550,650,1515,721]
  ].forEach(l => line([[l[0], l[1]], [l[2], l[3]]], wire, 1));
  ctx.beginPath(); ctx.moveTo(956, 230); ctx.bezierCurveTo(956, 265, 975, 255, 984, 230);
  ctx.moveTo(961, 230); ctx.bezierCurveTo(962, 252, 970, 250, 978, 230); ctx.stroke();
  for (let i = 0; i < 12; i++) {
    line([[1558 + i * 3, 540 + i * 3], [1524 + i * 3, 618 + i * 3]], 'rgba(150,155,165,.6)', 1);
    line([[1496 + i * 3, 672 + i * 3], [1466 + i * 5, 736]], 'rgba(140,145,150,.7)', 1);
  }

  // Board
  const board = [[1056,229],[1175,229],[1609,426],[1459,722],[1425,722],[1369,696],[1360,712],[1038,567],[1044,551],[975,519],[967,534],[913,512]];
  ctx.save(); path(board, true); ctx.clip();
  ctx.imageSmoothingQuality = 'high';
  ctx.drawImage(low, X0, Y0, lw * S, lh * S);
  ctx.restore();
  line([[913,512],[967,534],[975,519],[1044,551],[1038,567],[1360,712],[1369,696],[1425,722]], '#7d7a60', 1);
  line([[1609,428],[1459,722]], '#80604a', 2);

  // Components
  const edge = 'rgba(200,176,150,.95)';
  path([[1143,369],[1193,392],[1171,438],[1120,416]], true); ctx.fillStyle = '#ecfa00'; ctx.fill();
  [[[1140,275],[1162,287],[1147,316],[1122,304]], [[1143,369],[1193,392],[1171,438],[1120,416]],
   [[1209,514],[1321,564],[1273,657],[1163,608]], [[1498,382],[1569,413],[1548,456],[1475,424]],
   [[1466,440],[1538,472],[1518,514],[1445,482]], [[1425,520],[1497,553],[1475,595],[1403,563]],
   [[1394,578],[1466,611],[1445,653],[1371,622]]].forEach(p => line(p, edge, 1, true));
  line([[1162,287],[1147,316]], '#4a9a30', 2);
  line([[1194,393],[1172,439],[1120,417]], '#7c8420', 2);
  line([[1323,565],[1275,658]], '#8a3010', 2);
  line([[1274,658],[1163,609]], '#a04a20', 1);

  // Heat sink, fins drawn from the back to the front
  path([[1290,360],[1387,385],[1411,410],[1348,534],[1226,482]], true);
  ctx.fillStyle = '#8e1a08'; ctx.fill();
  for (let i = 0; i < 15; i++) {
    const x = 1271 - i * 4.5, y = 333 + i * 8.7;
    path([[x, y], [x + 117, y + 52], [x + 138, y + 77], [x + 17, y + 27]], true);
    const g = ctx.createLinearGradient(x, y, x + 120, y + 60);
    g.addColorStop(0, i < 5 ? '#8c5200' : '#b01400');
    g.addColorStop(1, '#8a1804');
    ctx.fillStyle = g; ctx.fill();
    line([[x + 117, y + 53], [x + 138, y + 77]], '#e8b0a4', 1);
    line([[x, y + 2], [x + 116, y + 54]], i < 3 ? '#f0540a' : '#f01808', 3);
    line([[x + 17, y + 27], [x, y], [x + 117, y + 52]], '#e0b8ac', 1);
  }
  line([[1387,385],[1411,410],[1348,534],[1224,482]], '#c09080', 1);
  line([[1409,411],[1346,533]], '#6b1408', 2);
})();
```
